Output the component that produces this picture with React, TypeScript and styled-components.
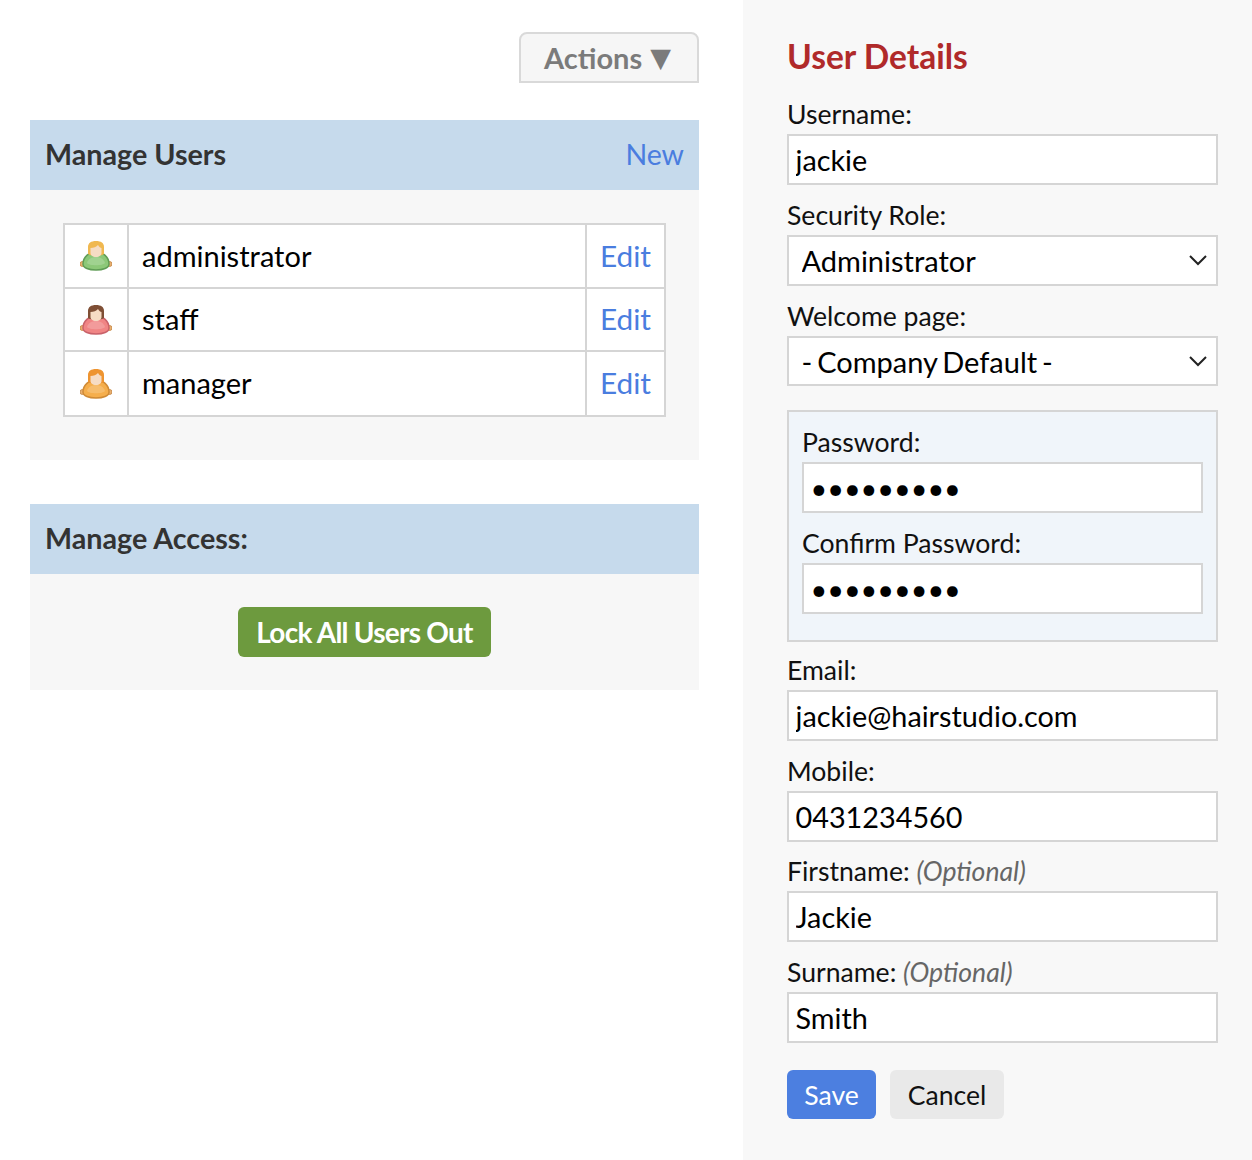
import React from "react";
import styled, { createGlobalStyle } from "styled-components";

const GlobalStyle = createGlobalStyle`
    html, body {
        margin: 0;
        padding: 0;
        background: #fff;
    }
    body {
        font-family: Lato, "Open Sans", sans-serif;
        font-size: 28px;
        color: #000;
    }
`;

const users = [
    { name: "administrator", hair: "#f0b850", shirt: "#8cc878", trim: "#5f9c55", height: 64 },
    { name: "staff", hair: "#7f4f35", shirt: "#f08585", trim: "#c9626a", height: 63 },
    { name: "manager", hair: "#ee9430", shirt: "#f5ae4c", trim: "#cf8a35", height: 65 },
];

const UserIcon = ({ hair, shirt, trim }: { hair: string; shirt: string; trim: string }) => (
    <svg width="32" height="32" viewBox="0 0 32 32">
        <circle cx="2.5" cy="25" r="2.5" fill="#eab070" stroke="#c98f50" />
        <circle cx="29.5" cy="25" r="2.5" fill="#eab070" stroke="#c98f50" />
        <path d="M3 25c0-7 6-12 13-12s13 5 13 12c0 4-6 6-13 6S3 29 3 25z" fill={shirt} stroke={trim} strokeWidth="1.5" />
        <path d="M7 24c1-4 5-6 9-6s8 2 9 6c-2 3-16 3-18 0z" fill="#fff" opacity="0.18" />
        <path d="M8 8c0-4 3-6 8-6s8 2 8 6v7c-2 2-14 2-16 0z" fill={hair} />
        <path d="M10.5 9c3 0 6-1 7.500-3 1 2 2.500 3 3.500 3v5c0 2-2 4-5.500 4s-5.500-2-5.500-4z" fill="#f6dcc4" />
    </svg>
);

const Chevron = () => (
    <svg width="20" height="12" viewBox="0 0 20 12">
        <path d="M2 2l8 8 8-8" fill="none" stroke="#222" strokeWidth="2" />
    </svg>
);

export default function App() {
    return (
        <Page>
            <GlobalStyle />
            <LeftColumn>
                <Toolbar>
                    <ActionsButton>
                        Actions <Arrow>▼</Arrow>
                    </ActionsButton>
                </Toolbar>
                <Panel>
                    <PanelHeader>
                        <PanelTitle>Manage Users</PanelTitle>
                        <HeaderLink href="#">New</HeaderLink>
                    </PanelHeader>
                    <UsersBody>
                        <UsersTable>
                            <colgroup>
                                <col style={{ width: 64 }} />
                                <col />
                                <col style={{ width: 79 }} />
                            </colgroup>
                            <tbody>
                                {users.map((user) => (
                                    <UserRow key={user.name} $height={user.height}>
                                        <IconCell>
                                            <UserIcon hair={user.hair} shirt={user.shirt} trim={user.trim} />
                                        </IconCell>
                                        <NameCell>{user.name}</NameCell>
                                        <EditCell>
                                            <EditLink href="#">Edit</EditLink>
                                        </EditCell>
                                    </UserRow>
                                ))}
                            </tbody>
                        </UsersTable>
                    </UsersBody>
                </Panel>
                <Panel>
                    <PanelHeader>
                        <PanelTitle>Manage Access:</PanelTitle>
                    </PanelHeader>
                    <AccessBody>
                        <LockButton type="button">Lock All Users Out</LockButton>
                    </AccessBody>
                </Panel>
            </LeftColumn>
            <DetailsPanel>
                <Heading>User Details</Heading>
                <Field>
                    <Label>Username:</Label>
                    <TextInput readOnly value="jackie" />
                </Field>
                <Field>
                    <Label>Security Role:</Label>
                    <SelectWrap>
                        <Select defaultValue="Administrator" $height={51}>
                            <option>Administrator</option>
                        </Select>
                        <ChevronSlot>
                            <Chevron />
                        </ChevronSlot>
                    </SelectWrap>
                </Field>
                <Field>
                    <Label>Welcome page:</Label>
                    <SelectWrap>
                        <Select defaultValue="- Company Default -" $height={50}>
                            <option>- Company Default -</option>
                        </Select>
                        <ChevronSlot>
                            <Chevron />
                        </ChevronSlot>
                    </SelectWrap>
                </Field>
                <PasswordBox>
                    <Field>
                        <Label>Password:</Label>
                        <TextInput type="password" readOnly value="123456789" />
                    </Field>
                    <Field>
                        <Label>Confirm Password:</Label>
                        <TextInput type="password" readOnly value="123456789" />
                    </Field>
                </PasswordBox>
                <Field>
                    <Label>Email:</Label>
                    <TextInput readOnly value="jackie@hairstudio.com" />
                </Field>
                <Field $gap={13}>
                    <Label>Mobile:</Label>
                    <TextInput readOnly value="0431234560" />
                </Field>
                <Field>
                    <Label>
                        Firstname: <Optional>(Optional)</Optional>
                    </Label>
                    <TextInput readOnly value="Jackie" />
                </Field>
                <Field>
                    <Label>
                        Surname: <Optional>(Optional)</Optional>
                    </Label>
                    <TextInput readOnly value="Smith" />
                </Field>
                <FormButtons>
                    <SaveButton type="button">Save</SaveButton>
                    <CancelButton type="button">Cancel</CancelButton>
                </FormButtons>
            </DetailsPanel>
        </Page>
    );
}

const Page = styled.div`
    display: flex;
    width: 1252px;
    min-height: 1160px;
`;

const LeftColumn = styled.div`
    width: 743px;
    box-sizing: border-box;
    padding: 32px 44px 0 30px;
`;

const Toolbar = styled.div`
    display: flex;
    justify-content: flex-end;
    margin-bottom: 37px;
`;

const ActionsButton = styled.div`
    width: 180px;
    height: 51px;
    box-sizing: border-box;
    display: flex;
    align-items: center;
    justify-content: center;
    gap: 8px;
    padding-right: 3px;
    background: #f6f6f6;
    border: 2px solid #d9d9d9;
    border-radius: 8px 8px 0 0;
    color: #7b7b7b;
    font-weight: 700;
    font-size: 29px;
`;

const Arrow = styled.span`
    font-family: "DejaVu Sans", sans-serif;
    font-size: 27px;
`;

const Panel = styled.section`
    background: #f7f7f7;
    margin-bottom: 44px;
`;

const PanelHeader = styled.div`
    height: 70px;
    display: flex;
    align-items: center;
    justify-content: space-between;
    padding: 0 15px 0 15px;
    background: #c6daec;
`;

const PanelTitle = styled.h2`
    margin: 0 0 3px;
    font-size: 28.7px;
    font-weight: 700;
    color: #333;
`;

const HeaderLink = styled.a`
    margin-bottom: 3px;
    color: #4a7ddf;
    font-size: 28.5px;
    text-decoration: none;
`;

const UsersBody = styled.div`
    padding: 33px 33px 43px;
`;

const UsersTable = styled.table`
    width: 603px;
    border-collapse: collapse;
    table-layout: fixed;
    background: #fff;
    border: 2px solid #d5d5d5;
`;

const UserRow = styled.tr<{ $height: number }>`
    height: ${(props) => props.$height}px;
`;

const Cell = styled.td`
    border: 2px solid #d5d5d5;
    padding: 0 0 2px;
`;

const IconCell = styled(Cell)`
    svg {
        display: block;
        margin: 0 auto;
        filter: blur(0.4px);
    }
`;

const NameCell = styled(Cell)`
    padding-left: 13px;
    font-size: 29px;
`;

const EditCell = styled(Cell)`
    text-align: center;
`;

const EditLink = styled.a`
    color: #4a7ddf;
    font-size: 29.8px;
    text-decoration: none;
`;

const AccessBody = styled.div`
    height: 116px;
    display: flex;
    justify-content: center;
    align-items: flex-start;
    padding-top: 33px;
    box-sizing: border-box;
`;

const LockButton = styled.button`
    width: 253px;
    height: 50px;
    border: 0;
    border-radius: 6px;
    background: #6d9a3e;
    color: #fff;
    font-family: inherit;
    font-size: 28px;
    font-weight: 700;
    letter-spacing: -0.75px;
    padding: 0;
`;

const DetailsPanel = styled.aside`
    width: 509px;
    box-sizing: border-box;
    padding: 35px 34px 0 44px;
    background: #f8f8f8;
`;

const Heading = styled.h1`
    margin: 0 0 21px;
    font-size: 33.5px;
    line-height: 42px;
    font-weight: 700;
    color: #b02a2a;
`;

const Field = styled.div<{ $gap?: number }>`
    margin-bottom: ${(props) => props.$gap ?? 14}px;
`;

const Label = styled.label`
    display: block;
    height: 34px;
    line-height: 32px;
    margin-bottom: 2px;
    font-size: 26.6px;
    color: #111;
`;

const Optional = styled.em`
    color: #666;
`;

const TextInput = styled.input`
    display: block;
    width: 100%;
    height: 51px;
    box-sizing: border-box;
    padding: 0 6.5px;
    border: 2px solid #d5d5d5;
    border-radius: 0;
    outline: none;
    background: #fff;
    color: #000;
    font-family: inherit;
    font-size: 28.8px;
`;

const SelectWrap = styled.div`
    position: relative;
`;

const Select = styled.select<{ $height: number }>`
    display: block;
    width: 100%;
    height: ${(props) => props.$height}px;
    box-sizing: border-box;
    padding: 0 12.5px;
    border: 2px solid #d5d5d5;
    border-radius: 0;
    outline: none;
    background: #fff;
    color: #000;
    font-family: inherit;
    font-size: 29px;
    word-spacing: -2.5px;
    appearance: none;
`;

const ChevronSlot = styled.span`
    position: absolute;
    right: 10px;
    top: 19px;
    line-height: 0;
`;

const PasswordBox = styled.div`
    box-sizing: border-box;
    height: 232px;
    margin: 24px 0 12px;
    padding: 14px 13px 0;
    background: #f0f5fa;
    border: 2px solid #d5d5d5;
`;

const FormButtons = styled.div`
    display: flex;
    gap: 14px;
    margin-top: 27px;
`;

const FormButton = styled.button`
    height: 49px;
    border: 0;
    border-radius: 6px;
    padding: 0;
    font-family: inherit;
    font-size: 26.6px;
`;

const SaveButton = styled(FormButton)`
    width: 89px;
    background: #4c7fe0;
    color: #fff;
`;

const CancelButton = styled(FormButton)`
    width: 114px;
    background: #e9e9e9;
    color: #111;
`;
